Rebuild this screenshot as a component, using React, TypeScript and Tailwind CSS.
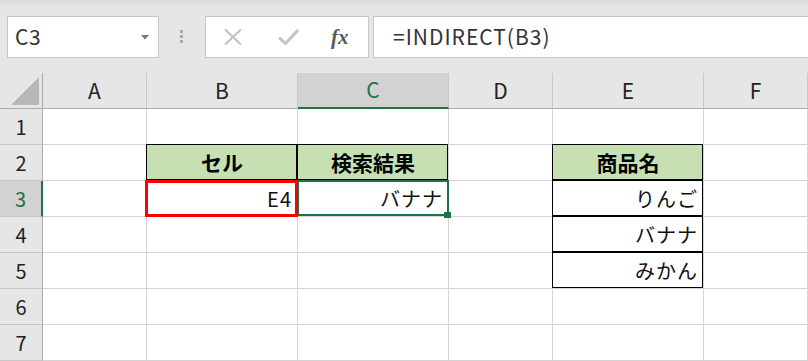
import type { ReactNode } from 'react';

const COLS = ['A', 'B', 'C', 'D', 'E', 'F'];
const ROWS = [1, 2, 3, 4, 5, 6, 7];

type CellDef = { text: string; head?: boolean };

// only the cells that hold something; all of them sit inside black borders
const cells: Record<string, CellDef> = {
  B2: { text: 'セル', head: true },
  C2: { text: '検索結果', head: true },
  B3: { text: 'E4' },
  C3: { text: 'バナナ' },
  E2: { text: '商品名', head: true },
  E3: { text: 'りんご' },
  E4: { text: 'バナナ' },
  E5: { text: 'みかん' },
};

function FormulaBar() {
  return (
    <div className="flex h-[73px] items-start pl-[7px] pt-[16px] bg-[linear-gradient(#d9d9d9,#e6e6e6_7px)]">
      {/* name box */}
      <div className="flex h-[42px] w-[152px] items-center justify-between border border-[#c6c6c6] bg-white pl-[7px] pr-[9px] text-[21px] tracking-[0.5px] text-[#333]">
        <span>C3</span>
        <svg width="8" height="5" viewBox="0 0 8 5">
          <path d="M0 0h8L4 4.5z" fill="#7a7a7a" />
        </svg>
      </div>

      <div className="ml-[21px] flex flex-col gap-[2px] pt-[14px]">
        <div className="h-[3px] w-[3px] bg-[#a8a8a8]" />
        <div className="h-[3px] w-[3px] bg-[#a8a8a8]" />
        <div className="h-[3px] w-[3px] bg-[#a8a8a8]" />
      </div>

      {/* cancel / enter / fx */}
      <div className="ml-[22px] flex h-[42px] w-[164px] items-center border border-[#c6c6c6] bg-white">
        <svg className="ml-[18px]" width="18" height="16" viewBox="0 0 18 16">
          <path d="M1 0.5l16 15M17 0.5l-16 15" stroke="#c4c4c4" strokeWidth="2.2" />
        </svg>
        <svg className="ml-[36px]" width="21" height="16" viewBox="0 0 21 16">
          <path d="M1 8.5l6.5 6L20 1" stroke="#c4c4c4" strokeWidth="3" fill="none" />
        </svg>
        <span className="ml-[32px] font-['Liberation_Serif',serif] text-[21px] font-bold italic leading-none text-[#5a5a5a]">
          fx
        </span>
      </div>

      {/* formula input */}
      <div className="ml-[4px] flex h-[42px] flex-1 items-center border border-r-0 border-[#c6c6c6] bg-white pl-[19px] text-[21px] tracking-[1px] text-[#333]">
        =INDIRECT(B3)
      </div>
    </div>
  );
}

function ColHeader({ label }: { label: string }) {
  const selected = label === 'C';
  return (
    <div
      className={
        selected
          ? 'flex items-center justify-center border-r border-b-2 border-r-[#c8c8c8] border-b-[#217346] bg-[#d2d2d2] text-[21px] text-[#217346]'
          : 'flex items-center justify-center border-r border-b border-r-[#c8c8c8] border-b-[#ababab] bg-[#e6e6e6] text-[21px] text-[#222]'
      }
    >
      {label}
    </div>
  );
}

function RowHeader({ n }: { n: number }) {
  const selected = n === 3;
  return (
    <div
      className={
        selected
          ? 'flex items-center justify-center border-r-2 border-b border-r-[#217346] border-b-[#c8c8c8] bg-[#d2d2d2] text-[20px] text-[#217346]'
          : 'flex items-center justify-center border-r border-b border-r-[#ababab] border-b-[#c8c8c8] bg-[#e6e6e6] text-[20px] text-[#222]'
      }
    >
      {n}
    </div>
  );
}

function Cell({ id }: { id: string }) {
  const def = cells[id];
  let overlay: ReactNode = null;
  if (id === 'B3') {
    overlay = <div className="pointer-events-none absolute -left-[2px] -top-px -right-px -bottom-px z-20 border-[3px] border-[#ff0000]" />;
  }
  if (id === 'C3') {
    overlay = (
      <>
        <div className="pointer-events-none absolute -left-px -top-px -right-px bottom-0 z-10 border-2 border-[#217346]" />
        <div className="pointer-events-none absolute -right-[3px] -bottom-[2px] z-10 h-[6px] w-[7px] bg-[#217346]" />
      </>
    );
  }

  if (!def) {
    return <div className="relative border-r border-b border-[#d4d4d4] bg-white">{overlay}</div>;
  }

  return (
    <div
      className={
        def.head
          ? 'relative flex items-center justify-center border-r border-b border-[#d4d4d4] bg-[#c6e0b4] text-[21px] font-bold text-black'
          : 'relative flex items-center justify-end border-r border-b border-[#d4d4d4] bg-white pr-[5px] text-[20px] text-[#111]'
      }
    >
      <span className={def.head ? '' : 'tracking-[1px]'}>{def.text}</span>
      <div className="pointer-events-none absolute -left-px -top-px right-0 bottom-0 border border-black" />
      {overlay}
    </div>
  );
}

function Sheet() {
  return (
    <div className="grid grid-cols-[43px_104px_151px_151px_104px_151px_104px] grid-rows-[repeat(8,36px)]">
      {/* select-all corner */}
      <div className="flex items-end justify-end border-r border-b border-r-[#ababab] border-b-[#ababab] bg-[#e6e6e6] pr-[3px] pb-[3px]">
        <svg width="28" height="28" viewBox="0 0 28 28">
          <path d="M0 28L28 0v28z" fill="#b8b8b8" />
        </svg>
      </div>
      {COLS.map((c) => (
        <ColHeader key={c} label={c} />
      ))}
      {ROWS.map((r) => [
        <RowHeader key={`h${r}`} n={r} />,
        ...COLS.map((c) => <Cell key={`${c}${r}`} id={`${c}${r}`} />),
      ])}
    </div>
  );
}

export default function App() {
  return (
    <div className="h-[361px] w-[808px] overflow-hidden bg-white font-['Noto_Sans_CJK_JP','Liberation_Sans',sans-serif]">
      <FormulaBar />
      <Sheet />
    </div>
  );
}
